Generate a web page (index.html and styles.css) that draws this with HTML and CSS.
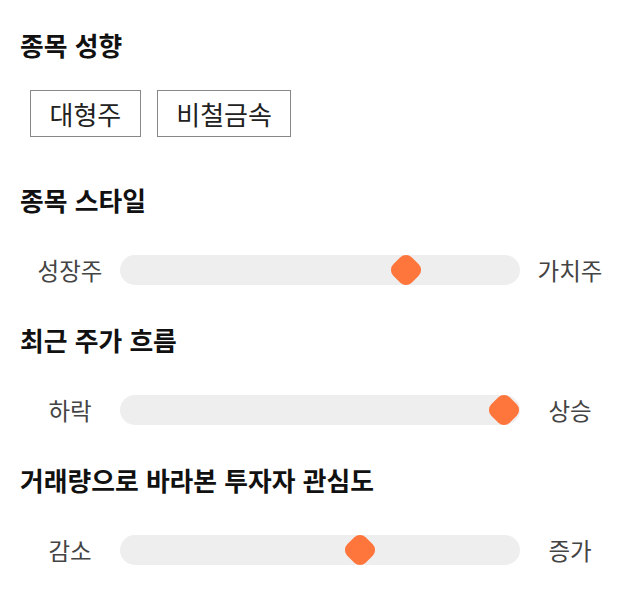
FILE: index.html
```html
<!DOCTYPE html>
<html lang="ko">
<head>
    <meta charset="UTF-8">
    <meta name="viewport" content="width=device-width, initial-scale=1.0">
    <title>종목 분석</title>
    <link rel="stylesheet" href="styles.css">
</head>
<body>
    <main class="stock-profile">
        <section class="group tags-group">
            <h2>종목 성향</h2>
            <div class="tags">
                <span class="tag">대형주</span>
                <span class="tag">비철금속</span>
            </div>
        </section>
        <section class="group">
            <h2>종목 스타일</h2>
            <div class="slider-row">
                <span class="label">성장주</span>
                <div class="track"><span class="knob" style="left: 71.4%"></span></div>
                <span class="label">가치주</span>
            </div>
        </section>
        <section class="group">
            <h2>최근 주가 흐름</h2>
            <div class="slider-row">
                <span class="label">하락</span>
                <div class="track"><span class="knob" style="left: 96.1%"></span></div>
                <span class="label">상승</span>
            </div>
        </section>
        <section class="group">
            <h2>거래량으로 바라본 투자자 관심도</h2>
            <div class="slider-row">
                <span class="label">감소</span>
                <div class="track"><span class="knob" style="left: 60%"></span></div>
                <span class="label">증가</span>
            </div>
        </section>
    </main>
</body>
</html>
```

FILE: styles.css
```css
body {
    font-family: "Noto Sans CJK KR", "Noto Sans", sans-serif;
    background-color: #fff;
    margin: 0;
    padding: 0;
}
.stock-profile {
    padding: 27px 20px 0;
}
.group {
    margin-bottom: 37px;
}
.group h2 {
    margin: 0 0 37px;
    font-size: 25.8px;
    line-height: 36px;
    font-weight: bold;
    color: #111;
}
.tags-group {
    margin-bottom: 45px;
}
.tags-group h2 {
    margin-bottom: 27px;
}
.tags {
    display: flex;
    gap: 16px;
    padding-left: 10px;
}
.tag {
    border: 1px solid #888;
    padding: 5px 18.5px;
    font-size: 26px;
    line-height: 35px;
    color: #222;
}
.slider-row {
    display: flex;
    align-items: center;
}
.label {
    width: 100px;
    text-align: center;
    font-size: 23.5px;
    line-height: 30px;
    color: #444;
}
.track {
    position: relative;
    flex: 1;
    height: 30px;
    border-radius: 15px;
    background: #eee;
}
.knob {
    position: absolute;
    top: 2px;
    width: 26px;
    height: 26px;
    margin-left: -13px;
    border-radius: 8px;
    background: #ff763d;
    transform: rotate(45deg);
}
```
